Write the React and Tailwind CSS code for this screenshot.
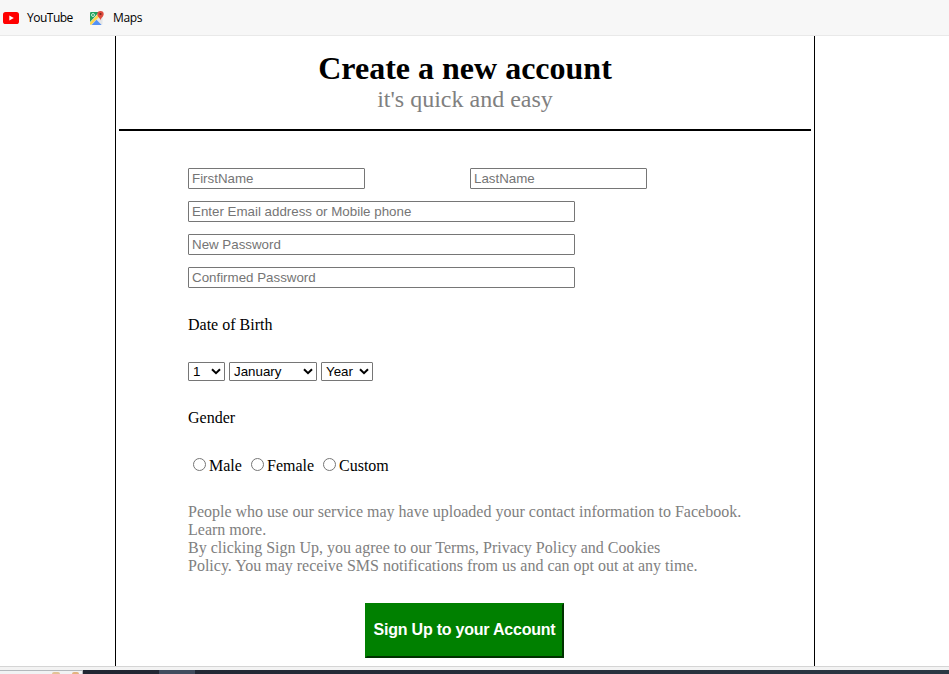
import React from "react";

const serif = "font-['Liberation_Serif',serif]";

function YouTubeIcon() {
  return (
    <svg width="16" height="12" viewBox="0 0 16 12" className="block">
      <rect width="16" height="12" rx="2.6" fill="#f00" />
      <path d="M6.3 3.4v5.2L10.8 6z" fill="#fff" />
    </svg>
  );
}

function MapsIcon() {
  return (
    <svg width="16" height="16" viewBox="0 0 16 16" className="block">
      <clipPath id="sheet">
        <rect x="1" y="2" width="12.5" height="13" rx="1.2" />
      </clipPath>
      <g clipPath="url(#sheet)">
        <rect width="16" height="16" fill="#e4e6e8" />
        <path d="M0 0H12L0 13z" fill="#1fa15d" />
        <path d="M0 13.5 11 2l2 2L1.5 15.5H0z" fill="#ffd54b" />
        <path d="M2.2 15.5 7.5 9.8l5.6 5.7z" fill="#5491f5" />
      </g>
      <circle cx="4" cy="5" r="1.5" fill="none" stroke="#d9f2e3" strokeWidth="0.9" />
      <path d="M11.5 10.5C11.2 8 8.3 7 8.3 4.1a3.2 3.2 0 0 1 6.4 0c0 2.9-2.9 3.9-3.2 6.4z" fill="#de4b3e" />
      <circle cx="11.5" cy="4" r="1.1" fill="#7b231e" />
    </svg>
  );
}

function Field({ placeholder, className }) {
  return (
    <input
      placeholder={placeholder}
      className={`block h-[21px] rounded-[1px] border border-[#767676] bg-white px-[3px] py-0 font-['Liberation_Sans',sans-serif] text-[13.333px] leading-[15px] placeholder:text-[#757575] ${className}`}
    />
  );
}

function Picker({ value, className }) {
  return (
    <button
      type="button"
      className={`flex h-[19px] items-center justify-between rounded-[1px] border border-[#767676] bg-white pl-1 pr-[3px] font-['Liberation_Sans',sans-serif] text-[13.333px] leading-[17px] text-black ${className}`}
    >
      <span>{value}</span>
      <svg width="10" height="7" viewBox="0 0 10 7" fill="none" stroke="#000" strokeWidth="2">
        <path d="m1 1.2 4 4 4-4" />
      </svg>
    </button>
  );
}

function Choice({ label, className }) {
  return (
    <label className={`flex items-center ${className}`}>
      <input type="radio" name="gender" className="mb-[3px] mr-[3px] block size-[13px]" />
      {label}
    </label>
  );
}

export default function App() {
  return (
    <div className="flex h-[674px] w-[949px] flex-col overflow-hidden bg-white">
      <header className="flex h-9 shrink-0 items-center border-b border-[#e9e9e9] bg-[#f7f7f7] pl-[3px] font-['Open_Sans',sans-serif] text-[12px] text-black">
        <YouTubeIcon />
        <span className="ml-2 w-[46px] whitespace-nowrap tracking-[-0.5px]">YouTube</span>
        <span className="ml-4"><MapsIcon /></span>
        <span className="ml-2 tracking-[-0.35px]">Maps</span>
      </header>

      <main className={`ml-[115px] h-[630px] w-[700px] shrink-0 border-x border-black px-[3px] text-[16px] leading-[18px] text-black ${serif}`}>
        <div className="flex h-[95px] flex-col items-center border-b-2 border-black pt-[14px]">
          <h1 className="text-[32px] font-bold leading-[36px]">Create a new account</h1>
          <p className="text-[24px] leading-[27px] text-[#808080]">it&apos;s quick and easy</p>
        </div>

        <form className="pl-[69px] pt-[37px]">
          <div className="flex flex-col gap-3">
            <div className="flex gap-[105px]">
              <Field placeholder="FirstName" className="w-[177px]" />
              <Field placeholder="LastName" className="w-[177px]" />
            </div>
            <Field placeholder="Enter Email address or Mobile phone" className="w-[387px]" />
            <Field placeholder="New Password" className="w-[387px]" />
            <Field placeholder="Confirmed Password" className="w-[387px]" />
          </div>

          <p className="mt-7">Date of Birth</p>
          <div className="mt-7 flex gap-1">
            <Picker value="1" className="w-[37px]" />
            <Picker value="January" className="w-[88px]" />
            <Picker value="Year" className="w-[52px]" />
          </div>

          <p className="mt-7">Gender</p>
          <div className="mt-[30px] flex pl-[5px]">
            <Choice label="Male" className="w-[58px]" />
            <Choice label="Female" className="w-[72px]" />
            <Choice label="Custom" className="w-[80px]" />
          </div>

          <p className="mt-7 whitespace-nowrap text-[#808080]">
            People who use our service may have uploaded your contact information to Facebook.
            <br />
            Learn more.
            <br />
            By clicking Sign Up, you agree to our Terms, Privacy Policy and Cookies
            <br />
            Policy. You may receive SMS notifications from us and can opt out at any time.
          </p>

          <button
            type="button"
            className="ml-[177px] mt-7 block h-[55px] w-[199px] whitespace-nowrap border-2 border-l-[#008000] border-t-[#008000] border-b-[#003200] border-r-[#003200] bg-[#008000] pb-[2px] font-['Liberation_Sans',sans-serif] text-[16px] font-bold tracking-[-0.22px] text-white"
          >
            Sign Up to your Account
          </button>
        </form>
      </main>

      <div className="h-1 shrink-0 border-t border-[#d5d5d5] bg-[#f3f3f3]" />
      <footer className="flex h-1 shrink-0 bg-linear-to-r from-[#202430] to-[#2b3844]">
        <div className="flex w-[83px] gap-3 border-t border-r border-[#b4b8bc] bg-[#f1f3f4] pl-[52px]">
          <span className="mt-px h-[2px] w-[8px] rounded-t bg-[#e3c396]" />
          <span className="mt-px h-[2px] w-[7px] rounded-t bg-[#e3b37f]" />
        </div>
        <div className="ml-[76px] w-9 bg-[#414c5e]" />
      </footer>
    </div>
  );
}
